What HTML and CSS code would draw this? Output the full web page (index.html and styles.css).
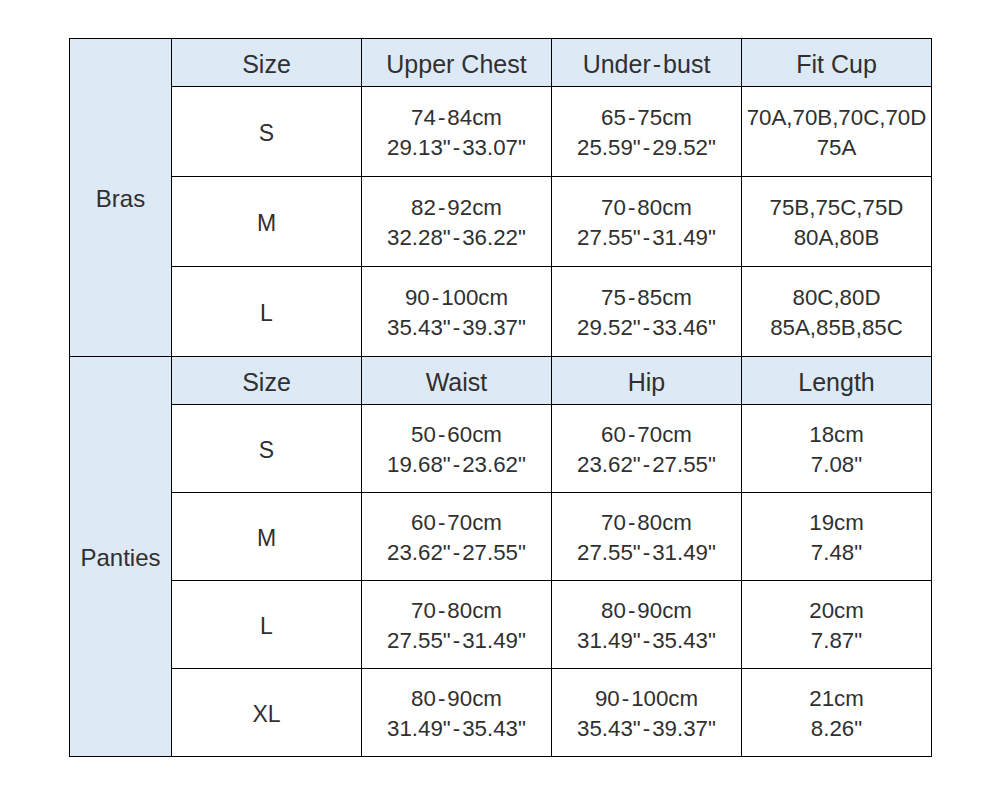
FILE: index.html
```html
<!DOCTYPE html>
<html>
<head>
<meta charset="utf-8">
<link rel="stylesheet" href="styles.css">
</head>
<body>
<table class="size-table">
  <colgroup>
    <col class="c-cat"><col class="c-val"><col class="c-val"><col class="c-val"><col class="c-val">
  </colgroup>
  <tbody>
    <tr class="head">
      <td class="cat" rowspan="4">Bras</td>
      <td>Size</td><td>Upper Chest</td><td>Under<span class="dash">-</span>bust</td><td>Fit Cup</td>
    </tr>
    <tr class="r90"><td class="sz">S</td><td>74<span class="dash">-</span>84cm<br>29.13"<span class="dash">-</span>33.07"</td><td>65<span class="dash">-</span>75cm<br>25.59"<span class="dash">-</span>29.52"</td><td>70A,70B,70C,70D<br>75A</td></tr>
    <tr class="r90"><td class="sz">M</td><td>82<span class="dash">-</span>92cm<br>32.28"<span class="dash">-</span>36.22"</td><td>70<span class="dash">-</span>80cm<br>27.55"<span class="dash">-</span>31.49"</td><td>75B,75C,75D<br>80A,80B</td></tr>
    <tr class="r90"><td class="sz">L</td><td>90<span class="dash">-</span>100cm<br>35.43"<span class="dash">-</span>39.37"</td><td>75<span class="dash">-</span>85cm<br>29.52"<span class="dash">-</span>33.46"</td><td>80C,80D<br>85A,85B,85C</td></tr>
    <tr class="head">
      <td class="cat" rowspan="5">Panties</td>
      <td>Size</td><td>Waist</td><td>Hip</td><td>Length</td>
    </tr>
    <tr class="r88"><td class="sz">S</td><td>50<span class="dash">-</span>60cm<br>19.68"<span class="dash">-</span>23.62"</td><td>60<span class="dash">-</span>70cm<br>23.62"<span class="dash">-</span>27.55"</td><td>18cm<br>7.08"</td></tr>
    <tr class="r88"><td class="sz">M</td><td>60<span class="dash">-</span>70cm<br>23.62"<span class="dash">-</span>27.55"</td><td>70<span class="dash">-</span>80cm<br>27.55"<span class="dash">-</span>31.49"</td><td>19cm<br>7.48"</td></tr>
    <tr class="r88"><td class="sz">L</td><td>70<span class="dash">-</span>80cm<br>27.55"<span class="dash">-</span>31.49"</td><td>80<span class="dash">-</span>90cm<br>31.49"<span class="dash">-</span>35.43"</td><td>20cm<br>7.87"</td></tr>
    <tr class="r88"><td class="sz">XL</td><td>80<span class="dash">-</span>90cm<br>31.49"<span class="dash">-</span>35.43"</td><td>90<span class="dash">-</span>100cm<br>35.43"<span class="dash">-</span>39.37"</td><td>21cm<br>8.26"</td></tr>
  </tbody>
</table>
</body>
</html>
```
FILE: styles.css
```css
html, body {
  margin: 0;
  padding: 0;
  background: #ffffff;
}
body {
  padding: 38px 0 0 69px;
  font-family: "Liberation Sans", Arial, sans-serif;
  color: #303030;
}
.size-table {
  border-collapse: collapse;
  table-layout: fixed;
  width: 863px;
}
.c-cat { width: 102px; }
.c-val { width: 190px; }
.size-table td {
  border: 1px solid #000000;
  padding: 3px 0 0 0;
  text-align: center;
  vertical-align: middle;
  font-size: 22.3px;
  line-height: 30px;
  white-space: nowrap;
}
.size-table .sz {
  font-size: 23px;
}
.size-table .cat {
  background: #dde9f5;
  font-size: 24px;
}
.size-table .head td {
  background: #dde9f5;
  font-size: 25px;
}
.size-table .head td.cat {
  font-size: 24px;
}
.dash {
  display: inline-block;
  margin: 0 2px;
}
.head { height: 48px; }
.r90 { height: 90px; }
.r88 { height: 88px; }
```
